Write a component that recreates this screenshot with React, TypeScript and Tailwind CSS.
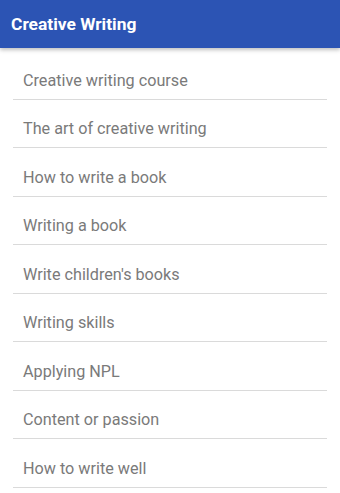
import React from "react";

const topics = [
  "Creative writing course",
  "The art of creative writing",
  "How to write a book",
  "Writing a book",
  "Write children's books",
  "Writing skills",
  "Applying NPL",
  "Content or passion",
  "How to write well",
];

const App = () => {
  return (
    <div className="w-[340px] h-[493px] bg-white overflow-hidden" style={{ fontFamily: "Roboto, 'Liberation Sans', sans-serif" }}>
      <header className="relative z-10 h-[48px] bg-[#2c54b4] flex items-center px-[11px] shadow-[0_2px_4px_rgba(0,0,0,0.25)]">
        <h1 className="text-white text-[17.4px] font-bold">Creative Writing</h1>
      </header>
      <ul className="mt-[3px] px-[13px]">
        {topics.map((t) => (
          <li
            key={t}
            className="h-[48.5px] flex items-end pb-[8px] pl-[10px] border-b-[1.5px] border-[#dadada] text-[16.2px] leading-[20px] text-[#7a7a7a]"
          >
            {t}
          </li>
        ))}
      </ul>
    </div>
  );
};

export default App;
